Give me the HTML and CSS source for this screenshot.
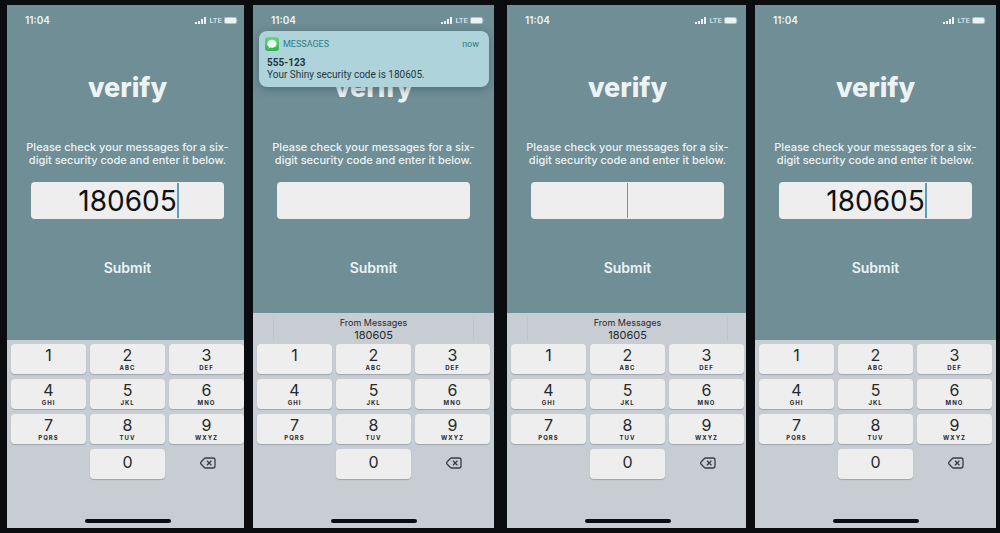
FILE: index.html
```html
<!DOCTYPE html>
<html lang="en">
<head>
    <meta charset="UTF-8">
    <meta name="viewport" content="width=device-width, initial-scale=1.0">
    <title>verify</title>
    <link rel="stylesheet" href="styles.css">
</head>
<body>
    <main class="phones" id="phones"></main>

    <script>
        const screens = [
            { code: '180605', caret: 'end', crop: 'crop-wide' },
            { code: '', notification: true, suggestion: true },
            { code: '', caret: 'middle', suggestion: true, crop: 'crop-narrow' },
            { code: '180605', caret: 'end' }
        ];

        const keys = [
            ['1', ''], ['2', 'ABC'], ['3', 'DEF'],
            ['4', 'GHI'], ['5', 'JKL'], ['6', 'MNO'],
            ['7', 'PQRS'], ['8', 'TUV'], ['9', 'WXYZ']
        ];

        const notification = `
            <section class="notification">
                <div class="notification-head">
                    <svg class="app-icon" viewBox="0 0 28 28" aria-hidden="true">
                        <defs>
                            <linearGradient id="green" x1="0" y1="0" x2="0" y2="1">
                                <stop offset="0" stop-color="#6bd877"/>
                                <stop offset="1" stop-color="#2fb053"/>
                            </linearGradient>
                        </defs>
                        <rect width="28" height="28" rx="6" fill="url(#green)"/>
                        <path d="M14 5.500c-5.500 0-9.500 3.500-9.500 8 0 2.800 1.500 5.100 4 6.500-.2 1.200-.9 2.200-1.800 3 1.800-.1 3.400-.8 4.600-1.800.9.200 1.800.3 2.700.3 5.500 0 9.500-3.500 9.500-8s-4-8-9.500-8z" fill="#e8fbef"/>
                    </svg>
                    <span>MESSAGES</span>
                    <time>now</time>
                </div>
                <strong>555-123</strong>
                <p>Your Shiny security code is 180605.</p>
            </section>`;

        const suggestion = `
            <div class="suggestion-bar">
                <button type="button" class="suggestion">
                    <small>From Messages</small>
                    <span>180605</span>
                </button>
            </div>`;

        function renderPhone(screen, i) {
            return `
            <div class="phone ${screen.crop || ''}">
                <div class="screen">
                    <div class="status">
                        <time>11:04</time>
                        <svg class="signal" viewBox="0 0 12 8" aria-hidden="true">
                            <path d="M0 6h2v2H0zM3 5h2v3H3zM6 3h2v5H6zM9 1h2v7H9z"/>
                        </svg>
                        <span>LTE</span>
                        <svg class="battery" viewBox="0 0 14 7" aria-hidden="true">
                            <rect width="13" height="7" rx="2" opacity=".5"/>
                            <rect x="1" y="1" width="11" height="5" rx="1"/>
                            <path d="M13.300 2.500v2c.5-.2.700-.5.700-1s-.2-.8-.7-1z" opacity=".6"/>
                        </svg>
                    </div>
                    ${screen.notification ? notification : ''}
                    <form class="verify">
                        <h1>verify</h1>
                        <label for="code${i}">Please check your messages for a six-<br>digit security code and enter it below.</label>
                        <div class="field">
                            <input type="text" id="code${i}" inputmode="numeric" value="${screen.code}">
                            ${screen.caret ? `<i class="caret caret-${screen.caret}"></i>` : ''}
                        </div>
                        <button type="submit" class="submit">Submit</button>
                    </form>
                    <div class="keyboard">
                        ${screen.suggestion ? suggestion : ''}
                        <div class="keys">
                            ${keys.map(([digit, letters]) => `
                                <button type="button" class="key">${digit}<small>${letters}</small></button>
                            `).join('')}
                            <button type="button" class="key key-zero">0</button>
                            <button type="button" class="key-delete" aria-label="Delete">
                                <svg viewBox="0 0 16 12" aria-hidden="true">
                                    <path d="M5.500 1H13a2 2 0 0 1 2 2v6a2 2 0 0 1-2 2H5.500a1.500 1.500 0 0 1-1.100-.5L1 7a1.400 1.400 0 0 1 0-2l3.400-3.500A1.500 1.500 0 0 1 5.500 1z"/>
                                    <path d="M7 3.800l4.400 4.400M11.400 3.800L7 8.200"/>
                                </svg>
                            </button>
                        </div>
                        <div class="home-bar"></div>
                    </div>
                </div>
            </div>`;
        }

        document.getElementById('phones').innerHTML = screens.map(renderPhone).join('');

        document.querySelectorAll('.verify').forEach(form => {
            form.addEventListener('submit', e => e.preventDefault());
        });
    </script>
</body>
</html>
```
FILE: styles.css
```css
* {
    margin: 0;
    padding: 0;
    box-sizing: border-box;
}

body {
    font-family: 'Inter', 'Liberation Sans', sans-serif;
    background: #0b0c0f;
    color: #edf3f5;
}

button, input {
    font: inherit;
    color: inherit;
    border: none;
    background: none;
}

button {
    cursor: pointer;
}

.phones {
    display: grid;
    grid-template-columns: 237fr 243fr 241fr 241fr;
    column-gap: 9px;
    min-height: 100vh;
    padding: 5px 4px 5px 7px;
}

.phone {
    display: flex;
    overflow: hidden;
    background: #6f8e95;
}

.screen {
    position: relative;
    display: flex;
    flex: 1;
    flex-direction: column;
}

/* the right edge of these two screens runs past the frame */
.crop-wide .screen {
    margin-right: -4px;
}

.crop-narrow .screen {
    margin-right: -2px;
}

.phone:nth-child(2) {
    margin-right: 2px;
}

.phone:nth-child(3) {
    margin-left: 2px;
}

.status {
    display: flex;
    align-items: center;
    gap: 2px;
    height: 30px;
    padding: 0 10px 0 18px;
    font-family: 'Roboto', sans-serif;
    font-size: 8px;
}

.status time {
    margin-right: auto;
    font-family: 'Inter', sans-serif;
    font-size: 10px;
    font-weight: 600;
}

.status svg {
    fill: #edf3f5;
}

.signal {
    width: 12px;
    height: 8px;
}

.battery {
    width: 14px;
    height: 7px;
}

.notification {
    position: absolute;
    top: 26px;
    left: 6px;
    right: 5px;
    z-index: 1;
    padding: 6px 10px 6px 8px;
    border-radius: 8px;
    background: #aed3db;
    box-shadow: 0 2px 10px rgba(30, 60, 70, 0.4);
    color: #26383d;
    font-family: 'Roboto', sans-serif;
    font-size: 10px;
    line-height: 12px;
}

.notification-head {
    display: flex;
    align-items: center;
    gap: 4px;
    margin: 0 0 6px -2px;
    color: #2f7b80;
    font-size: 9px;
    line-height: 14px;
}

.notification-head time {
    margin-left: auto;
}

.app-icon {
    width: 14px;
    height: 14px;
}

.notification strong {
    display: block;
    font-weight: 700;
}

.verify {
    display: flex;
    flex: 1;
    flex-direction: column;
    align-items: center;
    text-align: center;
}

h1 {
    margin: 34px 0 34px;
    font-size: 27px;
    font-weight: 800;
    line-height: 38px;
}

.verify label {
    font-size: 11px;
    font-weight: 500;
    line-height: 13px;
}

.field {
    position: relative;
    width: 80%;
    margin-top: 15px;
}

.field input {
    display: block;
    width: 100%;
    height: 37px;
    border-radius: 4px;
    background: #eeeeef;
    color: #101114;
    font-size: 28px;
    text-align: center;
    outline: none;
}

.caret {
    position: absolute;
    top: 1px;
    bottom: 1px;
    width: 1px;
    background: #5b9bbd;
}

.caret-middle {
    left: 50%;
}

.caret-end {
    left: calc(50% + 50px);
    width: 2px;
}

.submit {
    margin-top: 38px;
    padding: 0 10px;
    font-size: 14px;
    font-weight: 600;
    line-height: 22px;
}

.keyboard {
    background: #c8cdd3;
    color: #26292d;
}

.suggestion-bar {
    height: 27px;
    padding: 4px 20px 0;
}

.suggestion {
    width: 100%;
    border: solid #c0c5cb;
    border-width: 0 1px;
    font-size: 11px;
    line-height: 12px;
}

.suggestion small {
    display: block;
    font-size: 9px;
    line-height: 12px;
}

.keys {
    display: grid;
    grid-template-columns: repeat(3, 1fr);
    grid-auto-rows: 30px;
    gap: 5px 4px;
    padding: 4px;
}

.key {
    display: flex;
    flex-direction: column;
    align-items: center;
    padding-top: 2px;
    border-radius: 4px;
    background: #eeeeef;
    box-shadow: 0 1px 1px #9fa5ac;
    font-size: 16px;
    line-height: 18px;
}

.key small {
    font-size: 6px;
    font-weight: 700;
    letter-spacing: 1px;
    line-height: 8px;
}

.key-zero {
    grid-column: 2;
    padding-top: 4px;
}

.key-delete {
    display: grid;
    place-items: center;
    padding: 0 0 2px 2px;
}

.key-delete svg {
    width: 16px;
    height: 12px;
    fill: none;
    stroke: #3a3e43;
    stroke-width: 1.3;
}

.home-bar {
    width: 86px;
    height: 4px;
    margin: 36px auto 5px;
    border-radius: 2px;
    background: #0b0c0f;
}
```
